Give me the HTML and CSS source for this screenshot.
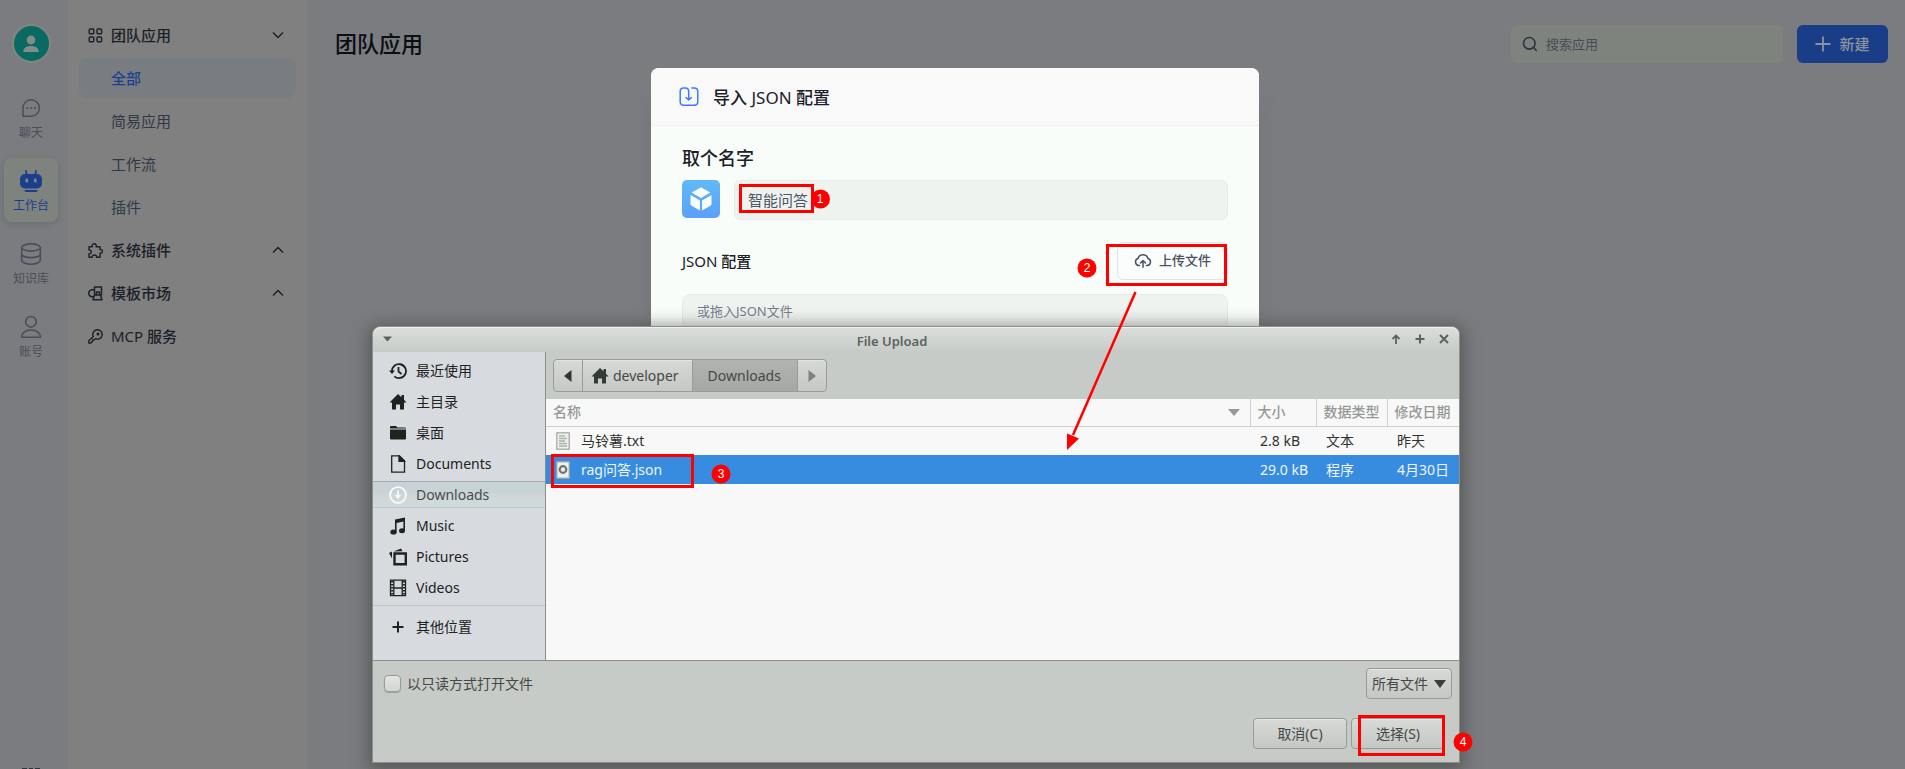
FILE: index.html
```html
<!DOCTYPE html>
<html lang="zh-CN">
<head>
<meta charset="utf-8">
<title>团队应用</title>
<link rel="stylesheet" href="styles.css">
</head>
<body>
<div class="app">
  <nav class="rail">
    <span class="avatar">
      <svg width="18" height="18" viewBox="0 0 18 18" fill="currentColor"><circle cx="9" cy="5" r="4.4"/><path d="M1.3 17c0-4 3-6 7.700-6s7.700 2 7.700 6z"/></svg>
    </span>
    <a class="rail-item" href="#">
      <svg width="24" height="24" viewBox="0 0 24 24" fill="none" stroke="currentColor" stroke-width="1.500"><path d="M4 20v-8a8.200 8.200 0 1 1 8.200 8.200H4z" stroke-linejoin="round"/><g fill="currentColor" stroke="none"><circle cx="8.300" cy="12" r="1.100"/><circle cx="12.200" cy="12" r="1.100"/><circle cx="16.100" cy="12" r="1.100"/></g></svg>
      <span>聊天</span>
    </a>
    <a class="rail-item rail-active" href="#">
      <svg width="24" height="24" viewBox="0 0 24 24"><g fill="none" stroke="currentColor" stroke-width="1.800" stroke-linecap="round"><path d="M7 2l.8 4M17 2l-.8 4M6.500 22h11"/></g><rect x="1" y="5" width="22" height="14.500" rx="5" fill="currentColor"/><g fill="#848a82"><rect x="6.500" y="9.500" width="2.600" height="4" rx="1.200"/><rect x="15" y="9.500" width="2.600" height="4" rx="1.200"/></g></svg>
      <span>工作台</span>
    </a>
    <a class="rail-item" href="#">
      <svg width="24" height="24" viewBox="0 0 24 24" fill="none" stroke="currentColor" stroke-width="1.600"><ellipse cx="12" cy="5.500" rx="9.300" ry="3.600"/><path d="M2.700 5.500v12.800c0 2.200 4 3.900 9.300 3.900s9.300-1.700 9.300-3.900V5.500M2.700 12c0 2.100 4 3.600 9.300 3.600s9.300-1.500 9.300-3.600"/></svg>
      <span>知识库</span>
    </a>
    <a class="rail-item" href="#">
      <svg width="24" height="24" viewBox="0 0 24 24" fill="none" stroke="currentColor" stroke-width="1.600"><circle cx="12" cy="6.800" r="5.300"/><path d="M2.500 22.200c0-4.200 4-7.200 9.500-7.200s9.500 3 9.500 7.200z" stroke-linejoin="round"/></svg>
      <span>账号</span>
    </a>
    <a class="rail-more" href="#" aria-label="更多"><svg width="18" height="18" viewBox="0 0 18 18" fill="none" stroke="currentColor" stroke-width="2"><path d="M0 1h5M7 1h4M13 1h5M2 8h14"/></svg></a>
  </nav>
  <nav class="menu">
    <a class="menu-item menu-group" href="#">
      <svg width="15" height="15" viewBox="0 0 15 15" fill="none" stroke="currentColor" stroke-width="1.400"><rect x="1.200" y="1" width="4.600" height="4.800" rx="1"/><rect x="9" y="1" width="4.600" height="4.800" rx="1"/><rect x="1.200" y="9" width="4.600" height="4.800" rx="1"/><rect x="9" y="9" width="4.600" height="4.800" rx="1"/></svg>
      <span>团队应用</span>
      <svg class="chevron" width="12" height="12" viewBox="0 0 12 12" fill="none" stroke="currentColor" stroke-width="1.500"><path d="M1 3.500l5 5 5-5"/></svg>
    </a>
    <a class="menu-item menu-sub menu-active" href="#">全部</a>
    <a class="menu-item menu-sub" href="#">简易应用</a>
    <a class="menu-item menu-sub" href="#">工作流</a>
    <a class="menu-item menu-sub" href="#">插件</a>
    <a class="menu-item menu-group" href="#">
      <svg width="15" height="15" viewBox="0 0 15 15" fill="none" stroke="currentColor" stroke-width="1.400" stroke-linejoin="round"><path d="M1 3.800h3.300C3.800 1.900 4.800.8 6.200.8s2.500 1.100 2 3H12v2.800c1.600-.2 2.400.8 2.400 1.800s-.8 2-2.400 1.800v4H8.600c.1-1.500-.9-2.200-2.200-2.200s-2.300.7-2.200 2.200H1v-3.500c1.600.1 2.300-.9 2.300-1.900S2.600 6.900 1 7z"/></svg>
      <span>系统插件</span>
      <svg class="chevron" width="12" height="12" viewBox="0 0 12 12" fill="none" stroke="currentColor" stroke-width="1.500"><path d="M1 8.500l5-5 5 5"/></svg>
    </a>
    <a class="menu-item menu-group" href="#">
      <svg width="15" height="15" viewBox="0 0 15 15" fill="none" stroke="currentColor" stroke-width="1.500" stroke-linejoin="round"><path d="M6.500 1h7v8h-7zM6 3.500C-1 3.500-1 11 6 11M6.500 9L5 13.800h9L12.500 9M8.500 9V6h3v3"/></svg>
      <span>模板市场</span>
      <svg class="chevron" width="12" height="12" viewBox="0 0 12 12" fill="none" stroke="currentColor" stroke-width="1.500"><path d="M1 8.500l5-5 5 5"/></svg>
    </a>
    <a class="menu-item menu-group" href="#">
      <svg width="15" height="15" viewBox="0 0 15 15" fill="none" stroke="currentColor" stroke-width="1.400" stroke-linejoin="round"><path d="M5.300 7.600A4.700 4.700 0 1 1 7.500 9.700L6 11H4.600v1.300L3 14H.8v-2.200z"/><circle cx="10" cy="5" r=".8" fill="currentColor"/></svg>
      <span><span class="latin">MCP</span> 服务</span>
    </a>
  </nav>
  <main class="main">
    <header class="topbar">
      <h1>团队应用</h1>
      <label class="search">
        <svg width="16" height="16" viewBox="0 0 16 16" fill="none" stroke="currentColor" stroke-width="1.600" stroke-linecap="round"><circle cx="7.300" cy="7.300" r="5.800"/><path d="M11.500 11.500L14.300 14.500"/></svg>
        <input type="search" placeholder="搜索应用" aria-label="搜索应用">
      </label>
      <button class="create" type="button"><svg width="16" height="16" viewBox="0 0 16 16" stroke="currentColor" stroke-width="1.800"><path d="M8 .5v15M.5 8h15"/></svg>新建</button>
    </header>
  </main>
</div>

<section class="dialog" role="dialog" aria-labelledby="dialog-title">
  <header class="dialog-head">
    <svg width="20" height="20" viewBox="0 0 20 20" fill="none" stroke="#3f78ff" stroke-width="1.500" stroke-linecap="round" stroke-linejoin="round"><path d="M9.700 13V4.500C9.700 2.300 8.300 1 6.200 1H4.500C2.500 1 1.200 2.300 1.200 4.300v10.200c0 2.200 1.300 3.700 3.500 3.700h10.600c2.200 0 3.500-1.500 3.500-3.700V4.300c0-2-1.300-3.300-3.300-3.300h-2.700M7 10.500L9.700 13l2.700-2.500"/></svg>
    <h2 id="dialog-title">导入 <span class="latin">JSON</span> 配置</h2>
  </header>
  <div class="dialog-body">
    <label class="name-label" for="app-name">取个名字</label>
    <div class="name-row">
      <span class="app-icon"><svg width="24" height="26" viewBox="0 0 24 26" fill="#f6fdfc"><path d="M12 1.200l9.300 5.300L12 12 2.700 6.500zM1.500 9l9.500 5.500v10L3 20c-1-.6-1.500-1.300-1.500-2.500zM22.500 9L13 14.500v10l8-4.500c1-.6 1.500-1.300 1.500-2.500z"/></svg></span>
      <input id="app-name" type="text" value="智能问答">
    </div>
    <div class="config-row">
      <label for="config"><span class="latin">JSON</span> 配置</label>
      <button class="upload" type="button"><svg width="18" height="16" viewBox="0 0 18 16" fill="none" stroke="currentColor" stroke-width="1.500" stroke-linecap="round" stroke-linejoin="round"><path d="M5.500 13.500H4.800A3.600 3.600 0 0 1 4 6.500a5.200 5.200 0 0 1 10 0 3.600 3.600 0 0 1-.8 7h-.7M9 15.200V9M6.500 11L9 8.600l2.500 2.400"/></svg>上传文件</button>
    </div>
    <textarea id="config" rows="8" placeholder="或拖入JSON文件"></textarea>
  </div>
</section>

<section class="window" role="dialog" aria-labelledby="window-title">
  <header class="titlebar">
    <button type="button" aria-label="窗口菜单"><svg width="10" height="6" viewBox="0 0 10 6" fill="currentColor"><path d="M0 .5h9L4.500 5.500z"/></svg></button>
    <h2 id="window-title">File Upload</h2>
    <div class="window-buttons">
      <button type="button" aria-label="还原"><svg width="10" height="10" viewBox="0 0 10 10" fill="none" stroke="currentColor" stroke-width="1.800"><path d="M5 10V1.500M1.500 5L5 1.500 8.500 5"/></svg></button>
      <button type="button" aria-label="最大化"><svg width="10" height="10" viewBox="0 0 10 10" stroke="currentColor" stroke-width="2"><path d="M5 .5v9M.5 5h9"/></svg></button>
      <button type="button" aria-label="关闭"><svg width="10" height="10" viewBox="0 0 10 10" stroke="currentColor" stroke-width="2"><path d="M1 1l8 8M9 1L1 9"/></svg></button>
    </div>
  </header>
  <div class="browser">
    <ul class="places">
      <li><svg width="18" height="18" viewBox="0 0 18 18" fill="none" stroke="currentColor" stroke-width="1.800"><path d="M3 9.500a7 7 0 1 1 2.300 4.800M9.500 5v4.500l3 2.500"/><path d="M0 8.500h6L3 12z" fill="currentColor" stroke="none"/></svg>最近使用</li>
      <li><svg width="18" height="18" viewBox="0 0 18 18" fill="currentColor"><path d="M9 1l3.500 3.300V2H15v4.800L17.500 9.500H15V16.500h-4v-5H7v5H3v-7H.5z"/></svg>主目录</li>
      <li><svg width="18" height="18" viewBox="0 0 18 18" fill="currentColor"><path d="M1 4.500V3q0-1 1-1h5l1.500 1.500H16q1 0 1 1zM1 5.500h16v9q0 1-1 1H2q-1 0-1-1z"/></svg>桌面</li>
      <li><svg width="18" height="18" viewBox="0 0 18 18" fill="none" stroke="currentColor" stroke-width="1.300"><path d="M2.700.8h7.800l5 5v11.400H2.700z"/><path d="M10 .8v5.500h5.500z" fill="currentColor"/></svg>Documents</li>
      <li class="place-active"><svg width="18" height="18" viewBox="0 0 18 18" fill="none" stroke="#f8fcfb" stroke-width="1.800"><circle cx="9" cy="9" r="7.900"/><path d="M9 4.500V11"/><path d="M5.800 9h6.400L9 13z" fill="#f8fcfb" stroke="none"/></svg>Downloads</li>
      <li><svg width="18" height="18" viewBox="0 0 18 18" fill="currentColor"><path d="M6 2.500L16 .5v13h-1.600V4.500L7.600 6v9H6z"/><ellipse cx="4.500" cy="15" rx="3.200" ry="2.600"/><ellipse cx="13" cy="13.700" rx="3" ry="2.500"/></svg>Music</li>
      <li><svg width="18" height="18" viewBox="0 0 18 18"><path d="M5.500 5.500h11.300v10.800H5.500z" fill="none" stroke="currentColor" stroke-width="2.400"/><path d="M4.500 3.500L12 .5l1.500 2.800zM0 5l3-1.500v7z" fill="currentColor"/></svg>Pictures</li>
      <li><svg width="18" height="18" viewBox="0 0 18 18" fill="none" stroke="currentColor" stroke-width="1.300"><path d="M1.500 1.200h15v15.500h-15zM4.800 1v16M13.200 1v16M4.800 9h8.400"/><path d="M3.100 2v15M14.900 2v15" stroke-width="2" stroke-dasharray="1.500 1.500"/></svg>Videos</li>
      <li class="place-other"><svg width="18" height="18" viewBox="0 0 18 18" stroke="currentColor" stroke-width="2"><path d="M9 3.500v11M3.500 9h11"/></svg>其他位置</li>
    </ul>
    <div class="files">
      <div class="pathbar">
        <button type="button" aria-label="后退"><svg width="8" height="12" viewBox="0 0 8 12" fill="#303630"><path d="M7.500 0v12L0 6z"/></svg></button>
        <button class="path-home" type="button"><svg width="18" height="18" viewBox="0 0 18 18" fill="#343a35"><path d="M9 1l3.500 3.300V2H15v4.800L17.500 9.500H15V16.500h-4v-5H7v5H3v-7H.5z"/></svg>developer</button>
        <button class="path-current" type="button">Downloads</button>
        <button type="button" aria-label="前进"><svg width="8" height="12" viewBox="0 0 8 12" fill="#7d827d"><path d="M.5 0v12L8 6z"/></svg></button>
      </div>
      <div class="listing">
        <table>
          <colgroup><col><col class="col-size"><col class="col-type"><col class="col-date"></colgroup>
          <thead>
            <tr><th><span class="sorted">名称<svg width="12" height="7" viewBox="0 0 12 7" fill="currentColor"><path d="M0 0h12L6 7z"/></svg></span></th><th>大小</th><th>数据类型</th><th>修改日期</th></tr>
          </thead>
          <tbody>
            <tr><td><span class="file"><svg width="14" height="18" viewBox="0 0 14 18"><rect x=".8" y=".8" width="12.400" height="16.400" fill="#eef0ed" stroke="#a0a49e" stroke-width="1.200"/><path d="M3 4h6M3 6.500h8M3 9h6M3 11.500h8M3 14h8" stroke="#adb1ac" stroke-width="1.300"/></svg>马铃薯.txt</span></td><td>2.8 kB</td><td>文本</td><td>昨天</td></tr>
            <tr class="selected"><td><span class="file"><svg width="14" height="18" viewBox="0 0 14 18"><rect x=".8" y=".8" width="12.400" height="16.400" fill="#eef0ed" stroke="#a0a49e" stroke-width="1.200"/><circle cx="7" cy="8.500" r="3.300" fill="none" stroke="#70746f" stroke-width="2.200"/></svg>rag问答.json</span></td><td>29.0 kB</td><td>程序</td><td>4月30日</td></tr>
          </tbody>
        </table>
      </div>
    </div>
  </div>
  <footer class="window-foot">
    <div class="foot-row">
      <label class="readonly"><input type="checkbox">以只读方式打开文件</label>
      <span class="filter">
        <select aria-label="文件类型"><option>所有文件</option></select>
        <svg width="12" height="8" viewBox="0 0 12 8" fill="currentColor"><path d="M0 0h12L6 8z"/></svg>
      </span>
    </div>
    <div class="foot-actions">
      <button type="button">取消(C)</button>
      <button type="button">选择(S)</button>
    </div>
  </footer>
</section>

<svg class="notes" width="1905" height="769" viewBox="0 0 1905 769">
  <g fill="none" stroke="#f00" stroke-width="3">
    <rect x="740.500" y="185.500" width="72" height="26"/>
    <rect x="1107.500" y="245.500" width="118" height="39"/>
    <rect x="552.500" y="455.500" width="140" height="31"/>
    <rect x="1359.500" y="716.500" width="84" height="38"/>
    <path d="M1135.500 292L1073 435" stroke-width="2.500"/>
  </g>
  <path d="M1067 450V433.500L1079 438.500z" fill="#f00"/>
  <g fill="#f00"><circle cx="820.500" cy="199" r="9.500"/><circle cx="1087" cy="268" r="9.500"/><circle cx="721" cy="474" r="9.500"/><circle cx="1463" cy="742" r="9.500"/></g>
  <g class="note-number"><text x="820" y="203">1</text><text x="1087" y="272">2</text><text x="721" y="478">3</text><text x="1463" y="746">4</text></g>
</svg>
</body>
</html>
```
FILE: styles.css
```css
* { box-sizing: border-box; }
body {
  margin: 0;
  height: 100vh;
  overflow: hidden;
  position: relative;
  font: 15px/24px "Noto Sans", "Noto Sans CJK SC", sans-serif;
  color: #1b2029;
}
a { color: inherit; text-decoration: none; }
h1, h2 { margin: 0; font-weight: 500; }
button, input, select, textarea { font: inherit; color: inherit; margin: 0; }
svg { flex: none; display: block; }
.latin { font-weight: 400; }

/* application shell, dimmed */
.app { display: flex; height: 100vh; background: #7a7c80; }
.rail {
  width: 68px;
  flex: none;
  display: flex;
  flex-direction: column;
  gap: 9px;
  padding: 24px 10px 0 4px;
  overflow: hidden;
  color: #4a4e5a;
}
.avatar {
  align-self: center;
  display: grid;
  place-items: center;
  width: 39px;
  height: 39px;
  margin-bottom: 13px;
  border: 2px solid #82857f;
  border-radius: 50%;
  background: #086a62;
  color: #848c86;
}
.rail-item {
  height: 64px;
  display: flex;
  flex-direction: column;
  align-items: center;
  justify-content: center;
  gap: 2px;
  padding-top: 6px;
  border-radius: 8px;
  font-size: 12px;
  line-height: 22px;
}
.rail-active {
  background: #7f837e;
  color: #1c3e8c;
  box-shadow: 0 2px 6px rgba(40, 45, 40, .16);
}
.rail-more { margin: auto auto -17px; color: #2f3440; }
.menu {
  width: 239px;
  flex: none;
  display: flex;
  flex-direction: column;
  gap: 3px;
  padding: 15px 11px;
  background: #808080;
}
.menu-item {
  height: 40px;
  display: flex;
  align-items: center;
  gap: 8px;
  padding: 0 12px 0 9px;
  border-radius: 8px;
}
.menu-group { font-weight: 500; }
.menu-sub { padding-left: 32px; color: #2f3945; }
.menu-active { background: #797c81; color: #1c3f8f; font-weight: 500; }
.chevron { margin-left: auto; }
.main { flex: 1; min-width: 0; }
.topbar {
  display: flex;
  align-items: center;
  gap: 14px;
  padding: 25px 17px 0 28px;
}
.topbar h1 { flex: 1; font-size: 22px; line-height: 36px; padding-bottom: 2px; color: #0b0e13; }
.search {
  width: 272px;
  height: 38px;
  display: flex;
  align-items: center;
  gap: 8px;
  padding: 0 11px;
  border-radius: 6px;
  background: #7f837e;
  color: #2f3440;
}
.search input {
  flex: 1;
  min-width: 0;
  border: 0;
  padding: 0;
  background: none;
  font-size: 13px;
}
.search input::placeholder { color: #474d56; opacity: 1; }
.create {
  width: 91px;
  height: 38px;
  display: flex;
  align-items: center;
  justify-content: center;
  gap: 8px;
  border: 0;
  border-radius: 6px;
  background: #1a3d87;
  color: #8c93a0;
  font-weight: 500;
}

/* import dialog */
.dialog {
  position: absolute;
  left: 651px;
  top: 68px;
  width: 608px;
  border-radius: 8px;
  overflow: hidden;
  background: #f8fdf9;
  box-shadow: 0 32px 20px 0 rgba(90, 90, 88, .2);
}
.dialog-head {
  display: flex;
  align-items: center;
  gap: 14px;
  height: 58px;
  padding: 0 28px;
  background: #f9f9f9;
  border-bottom: 1px solid #f1f2f1;
}
.dialog-head h2 { font-size: 17px; padding-top: 2px; }
.dialog-body { padding: 20px 31px; }
.name-label { display: block; font-size: 18px; font-weight: 500; }
.name-row { display: flex; gap: 14px; margin-top: 10px; }
.app-icon {
  width: 38px;
  height: 38px;
  display: grid;
  place-items: center;
  border-radius: 5px;
  background: linear-gradient(#61b9f7, #5aa0fa);
}
.name-row input {
  flex: 1;
  min-width: 0;
  height: 40px;
  padding: 0 13px 2px;
  border: 1px solid #e7ebeb;
  border-radius: 6px;
  background: #eff3f0;
  color: #4d5566;
}
.config-row {
  display: flex;
  align-items: center;
  justify-content: space-between;
  margin: 22px 0 14px;
  font-weight: 500;
}
.upload {
  display: flex;
  align-items: center;
  gap: 7px;
  height: 38px;
  padding: 0 16px 2px;
  border: 1px solid #dfe4e8;
  border-radius: 6px;
  background: #fafdfb;
  color: #4b5262;
  font-size: 13px;
  font-weight: 500;
}
.dialog textarea {
  display: block;
  width: 100%;
  padding: 4px 14px;
  border: 1px solid #e5eaeb;
  border-radius: 8px;
  background: #eff3f0;
  font-size: 13px;
  resize: none;
}
.dialog textarea::placeholder { color: #737d8c; opacity: 1; }

/* file chooser window */
.window {
  position: absolute;
  left: 372px;
  top: 326px;
  width: 1088px;
  border: 1px solid #8b8e8b;
  border-radius: 8px 8px 0 0;
  background: #c7cbc7;
  color: #454945;
  font-size: 14px;
  box-shadow: 0 3px 16px 4px rgba(60, 60, 55, .55);
}
.titlebar {
  display: flex;
  align-items: center;
  height: 25px;
  padding: 0 10px 2px;
  border-top: 1px solid #f0f2f0;
  border-radius: 8px 8px 0 0;
  background: linear-gradient(#dadeda, #c7cbc7);
  color: #5e625e;
}
.titlebar h2 { flex: 1; font-size: 13px; font-weight: 600; padding-top: 3px; text-align: center; }
.titlebar button { border: 0; padding: 0; background: none; }
.window-buttons { display: flex; gap: 14px; }
.browser {
  display: flex;
  height: 309px;
  border-bottom: 1px solid #8b8e8b;
}
.places {
  width: 173px;
  flex: none;
  margin: 0;
  padding: 5px 0 0;
  list-style: none;
  border-right: 1px solid #8b8e8b;
  background: #d7dbe0;
  color: #202220;
}
.places li {
  display: flex;
  align-items: center;
  gap: 9px;
  height: 27px;
  margin-bottom: 4px;
  padding: 1px 15px 0 16px;
}
.place-active {
  border-top: 1px solid #a3abaf;
  border-bottom: 1px solid #bcc8cc;
  background: linear-gradient(#c8d3d8 45%, #cfd6d5 46%, #d0dadd);
  color: #454c50;
}
.places .place-other {
  height: 42px;
  margin: 4px 0 0;
  border-top: 1px solid #bcc6ca;
}
.files { flex: 1; min-width: 0; display: flex; flex-direction: column; }
.pathbar { display: flex; padding: 7px; }
.pathbar button {
  display: flex;
  align-items: center;
  gap: 4px;
  height: 33px;
  margin: 0 0 0 -1px;
  padding: 0 10px;
  border: 1px solid #989c98;
  background: linear-gradient(#d6d9d6, #c5c8c5);
  box-shadow: inset 0 1px 0 rgba(255, 255, 255, .35);
}
.pathbar button:first-child { margin: 0; border-radius: 4px 0 0 4px; }
.pathbar button:last-child { border-radius: 0 4px 4px 0; }
.pathbar .path-home { padding: 0 13px 0 8px; }
.pathbar .path-current {
  padding: 0 16px 0 15px;
  background: linear-gradient(#b1b4b1, #a5a7a5);
  box-shadow: none;
}
.listing { flex: 1; background: #f8f8f8; }
table { width: 100%; border-collapse: collapse; table-layout: fixed; color: #303330; }
.col-size { width: 66px; }
.col-type { width: 71px; }
.col-date { width: 72px; }
th, td { padding: 0; text-align: left; white-space: nowrap; }
th {
  height: 27px;
  padding-left: 7px;
  font-weight: 500;
  color: #969a96;
  border-bottom: 1px solid #cfd1cf;
}
th + th { border-left: 1px solid #cfd1cf; }
td { height: 29px; padding-left: 10px; }
.sorted { display: flex; align-items: center; justify-content: space-between; padding-right: 10px; }
.file { display: flex; align-items: center; gap: 11px; }
.selected { background: #388ce0; color: #eef5fb; }
.window-foot { padding: 7px 7px 13px 11px; }
.foot-row, .foot-actions { display: flex; align-items: center; }
.foot-row { justify-content: space-between; }
.readonly { display: flex; align-items: center; gap: 6px; }
.readonly input {
  appearance: none;
  width: 17px;
  height: 17px;
  border: 1px solid #989c98;
  border-radius: 4px;
  background: linear-gradient(#e3e5e3, #d2d5d2);
  box-shadow: 0 1px 1px rgba(0, 0, 0, .2);
}
.filter { position: relative; }
.filter svg { position: absolute; right: 6px; top: 12px; color: #393c39; pointer-events: none; }
.filter select, .foot-actions button {
  display: block;
  height: 31px;
  padding: 0 5px;
  border: 1px solid #989c98;
  border-radius: 4px;
  background: linear-gradient(#d8dad8, #c4c7c4);
  box-shadow: inset 0 1px 0 rgba(255, 255, 255, .35);
}
.filter select { appearance: none; width: 86px; }
.foot-actions { justify-content: flex-end; gap: 4px; margin-top: 19px; padding-right: 7px; }
.foot-actions button { width: 94px; }

/* step markers */
.notes { position: absolute; left: 0; top: 0; pointer-events: none; }
.note-number {
  fill: #fff;
  font: 12px "Liberation Sans", sans-serif;
  text-anchor: middle;
}
```
